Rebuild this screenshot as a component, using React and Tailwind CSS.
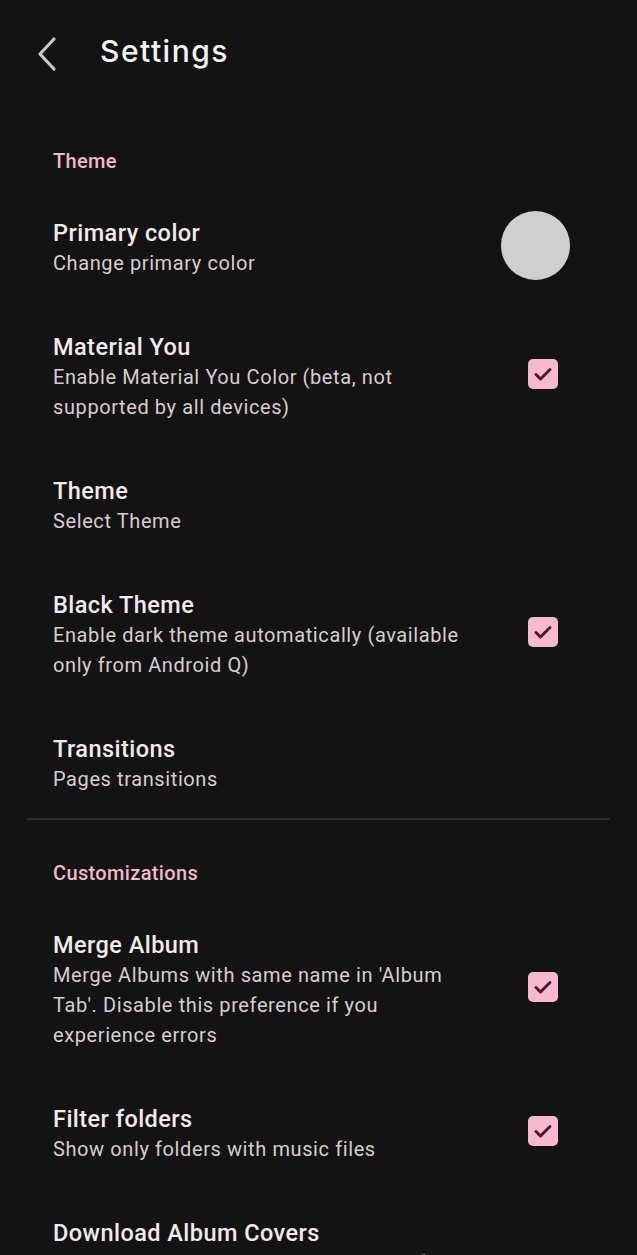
import React from "react";

const sections = [
  {
    title: "Theme",
    items: [
      { title: "Primary color", summary: "Change primary color", widget: "color" },
      {
        title: "Material You",
        summary: "Enable Material You Color (beta, not supported by all devices)",
        widget: "check",
      },
      { title: "Theme", summary: "Select Theme" },
      {
        title: "Black Theme",
        summary: "Enable dark theme automatically (available only from Android Q)",
        widget: "check",
      },
      { title: "Transitions", summary: "Pages transitions" },
    ],
  },
  {
    title: "Customizations",
    items: [
      {
        title: "Merge Album",
        summary: "Merge Albums with same name in 'Album Tab'. Disable this preference if you experience errors",
        widget: "check",
      },
      { title: "Filter folders", summary: "Show only folders with music files", widget: "check" },
      {
        title: "Download Album Covers",
        summary: "Automatically download album covers from the internet when they are missing in your music files",
        widget: "check",
      },
    ],
  },
];

function Checkbox() {
  return (
    <div className="mb-[6px] mr-[79px] flex h-[30px] w-[30px] items-center justify-center rounded-[5px] bg-[#f6b9d0]">
      <svg viewBox="0 0 24 24" className="h-[24px] w-[24px]" fill="none">
        <path d="M5 12.5l4.5 4.5L19 7.5" stroke="#4b1c30" strokeWidth="3" strokeLinecap="round" strokeLinejoin="round" />
      </svg>
    </div>
  );
}

function PrefRow({ title, summary, widget }) {
  return (
    <div className="flex items-center pb-[24px] pl-[53px] pt-[30px]">
      <div className="min-w-0 flex-1">
        <p className="text-[23.5px] font-medium leading-[30px] tracking-[0.45px] text-[#f3eaec]">{title}</p>
        <p className="text-[20px] leading-[30px] tracking-[0.6px] text-[#d8cdd0]">{summary}</p>
      </div>
      <div className="flex w-[155px] shrink-0 justify-end">
        {widget === "color" && <div className="-mb-[3px] -mt-[9px] mr-[67px] h-[69px] w-[69px] rounded-full bg-[#cfcfcf]" />}
        {widget === "check" && <Checkbox />}
      </div>
    </div>
  );
}

export default function App() {
  return (
    <div className="h-[1255px] overflow-hidden bg-[#131313] font-['Roboto',sans-serif]">
      <header className="flex h-[108px] items-center">
        <button className="ml-[33px] flex h-[40px] w-[28px] items-center justify-center">
          <svg viewBox="0 0 28 40" className="h-[40px] w-[28px]" fill="none">
            <path d="M21 5L7 20l14 15" stroke="#c9c9c9" strokeWidth="3.2" strokeLinecap="round" strokeLinejoin="round" />
          </svg>
        </button>
        <h1 className="mb-[6px] ml-[39px] font-['Inter',sans-serif] text-[30px] font-medium tracking-[1.5px] text-[#f4f4f4]">
          Settings
        </h1>
      </header>

      {sections.map((section, i) => (
        <section key={section.title}>
          {i > 0 && <div className="mx-[27px] h-[2px] bg-[#2c2c2c]" />}
          <h2 className="pb-[15px] pl-[53px] pt-[41px] text-[20px] font-medium leading-[24px] tracking-[0.35px] text-[#f2b8cc]">
            {section.title}
          </h2>
          {section.items.map((item) => (
            <PrefRow key={item.title} {...item} />
          ))}
        </section>
      ))}
    </div>
  );
}
